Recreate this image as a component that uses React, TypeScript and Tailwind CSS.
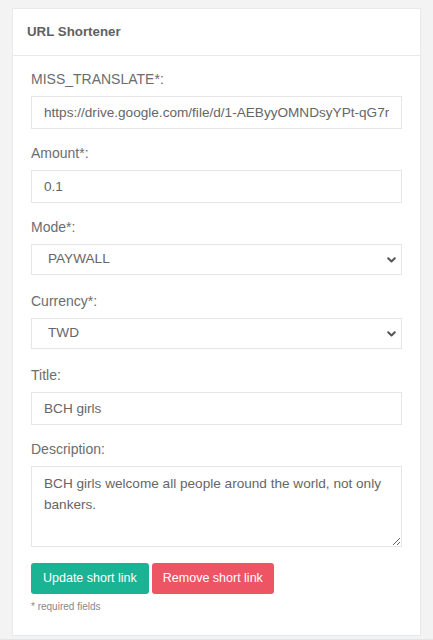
import { useState } from "react";

const Chevron = () => (
  <svg
    className="pointer-events-none absolute right-[6px] top-1/2 -translate-y-1/2"
    width="9"
    height="6"
    viewBox="0 0 9 6"
    fill="none"
  >
    <path d="M1.2 1.2 L4.5 4.5 L7.8 1.2" stroke="#555" strokeWidth="2" strokeLinecap="round" strokeLinejoin="round" />
  </svg>
);

const labelCls = "block text-[14px] leading-5 mb-[7px] text-[#6b6d70]";
const inputCls =
  "block w-full h-[33px] px-3 border border-[#e5e6e7] bg-white text-[13.6px] text-[#666] outline-none";
const selectCls =
  "block w-full h-[31px] pl-4 pr-8 border border-[#e5e6e7] bg-white text-[13.6px] text-[#666] outline-none appearance-none";

const App = () => {
  const [url, setUrl] = useState("https://drive.google.com/file/d/1-AEByyOMNDsyYPt-qG7rXq0lVsT");
  const [amount, setAmount] = useState("0.1");
  const [mode, setMode] = useState("PAYWALL");
  const [currency, setCurrency] = useState("TWD");
  const [title, setTitle] = useState("BCH girls");
  const [description, setDescription] = useState(
    "BCH girls welcome all people around the world, not only bankers."
  );

  return (
    <div
      className="min-h-[640px] bg-[#f3f3f4] pt-2 overflow-hidden"
      style={{ fontFamily: '"Liberation Sans", Arial, sans-serif' }}
    >
      <div className="mx-3 bg-white border border-[#e7eaec]">
        {/* Header */}
        <div className="h-[47px] flex items-center px-[14px] border-b border-[#e7eaec]">
          <h5 className="text-[13.3px] font-bold text-[#5f6163]">URL Shortener</h5>
        </div>

        {/* Form */}
        <form className="px-[18px] pt-[13px] pb-[22px]" onSubmit={(e) => e.preventDefault()}>
          <div className="mb-[14px]">
            <label className={labelCls}>MISS_TRANSLATE*:</label>
            <input className={inputCls} value={url} onChange={(e) => setUrl(e.target.value)} />
          </div>

          <div className="mb-[14px]">
            <label className={labelCls}>Amount*:</label>
            <input className={inputCls} value={amount} onChange={(e) => setAmount(e.target.value)} />
          </div>

          <div className="mb-[16px]">
            <label className={labelCls}>Mode*:</label>
            <div className="relative">
              <select className={selectCls} value={mode} onChange={(e) => setMode(e.target.value)}>
                <option>PAYWALL</option>
                <option>DONATION</option>
              </select>
              <Chevron />
            </div>
          </div>

          <div className="mb-[16px]">
            <label className={labelCls}>Currency*:</label>
            <div className="relative">
              <select className={selectCls} value={currency} onChange={(e) => setCurrency(e.target.value)}>
                <option>TWD</option>
                <option>USD</option>
                <option>BCH</option>
              </select>
              <Chevron />
            </div>
          </div>

          <div className="mb-[14px]">
            <label className={labelCls}>Title:</label>
            <input className={inputCls} value={title} onChange={(e) => setTitle(e.target.value)} />
          </div>

          <div className="mb-[16px]">
            <label className={labelCls}>Description:</label>
            <textarea
              className="block w-full h-[81px] px-3 pt-[6px] border border-[#e5e6e7] bg-white text-[13.6px] leading-[21px] text-[#666] outline-none"
              value={description}
              onChange={(e) => setDescription(e.target.value)}
            />
          </div>

          <div className="flex gap-[3px]">
            <button
              type="submit"
              className="h-[31px] px-[12px] rounded-[3px] bg-[#1ab394] text-white text-[12.5px]"
            >
              Update short link
            </button>
            <button
              type="button"
              className="h-[31px] px-[11px] rounded-[3px] bg-[#ed5565] text-white text-[12.5px]"
            >
              Remove short link
            </button>
          </div>

          <p className="mt-[7px] text-[10px] leading-3 text-[#888]">* required fields</p>
        </form>
      </div>

      <div className="mt-[3px] h-5 border-t border-[#e4e5e7] bg-[#eeeff0]" />
    </div>
  );
};

export default App;
